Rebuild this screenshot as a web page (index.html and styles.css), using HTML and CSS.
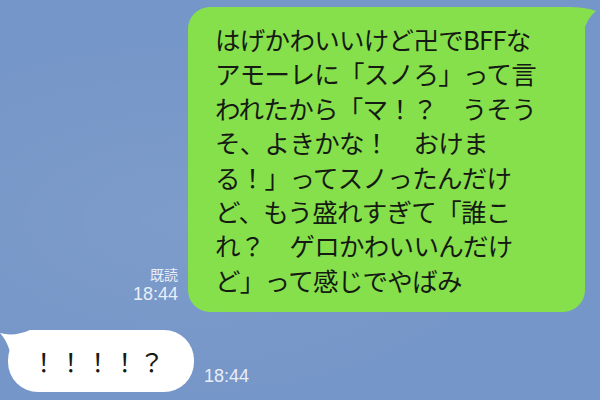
FILE: index.html
```html
<!DOCTYPE html>
<html lang="ja">

<head>
    <meta charset="UTF-8">
    <meta name="viewport" content="width=device-width, initial-scale=1.0">
    <title>トーク</title>
    <link rel="stylesheet" href="styles.css">
</head>

<body>
    <div class="chat">
        <div class="row row-me">
            <div class="meta">
                <span class="read">既読</span>
                <span class="time">18:44</span>
            </div>
            <div class="bubble bubble-me">
                <svg class="tail tail-me" width="45" height="40" viewBox="0 0 45 40">
                    <path d="M0 0 H16 Q32 0 43 4 Q34 11 30 26 V40 H0 Z" />
                </svg>
                <p>はげかわいいけど卍でBFFな<br>アモーレに「スノろ」って言<br>われたから「マ！？　うそう<br>そ、よきかな！　おけま<br>る！」ってスノったんだけ<br>ど、もう盛れすぎて「誰こ<br>れ？　ゲロかわいいんだけ<br>ど」って感じでやばみ</p>
            </div>
        </div>

        <div class="row row-you">
            <div class="bubble bubble-you">
                <svg class="tail tail-you" width="40" height="40" viewBox="0 0 40 40">
                    <path d="M0 3 Q14 7 30 0 H40 V40 H12 Q12 16 0 3 Z" />
                </svg>
                <p>！！！！？</p>
            </div>
            <div class="meta">
                <span class="time">18:44</span>
            </div>
        </div>
    </div>
</body>

</html>
```

FILE: styles.css
```css
body {
    margin: 0;
    padding: 0;
    width: 600px;
    height: 400px;
    overflow: hidden;
    background-color: #7596c8;
    background-image: radial-gradient(ellipse at 30% 55%, rgba(255, 255, 255, 0.06), transparent 60%);
    font-family: "Noto Sans CJK JP", "Liberation Sans", sans-serif;
}

.chat {
    display: flex;
    flex-direction: column;
    padding: 7px 15px 0 8px;
}

.row {
    display: flex;
    align-items: flex-end;
}

.row-me {
    justify-content: flex-end;
}

.row-you {
    margin-top: 18px;
}

.meta {
    display: flex;
    flex-direction: column;
    align-items: flex-end;
    color: #e9eef7;
    font-family: "Liberation Sans", "Noto Sans CJK JP", sans-serif;
}

.row-me .meta {
    margin-right: 10px;
    padding-bottom: 10px;
}

.row-you .meta {
    margin-left: 10px;
    padding-bottom: 8px;
}

.read {
    font-family: "Noto Sans CJK JP", sans-serif;
    font-size: 14px;
    line-height: 16px;
    margin-bottom: 4px;
}

.time {
    font-size: 18px;
    line-height: 16px;
}

.bubble {
    position: relative;
}

.bubble p {
    position: relative;
    margin: 0;
    white-space: nowrap;
    color: #151a12;
    font-size: 25.5px;
    letter-spacing: -0.7px;
}

.tail {
    position: absolute;
    top: 0;
}

.bubble-me {
    background-color: #86e04b;
    border-radius: 22px;
    padding: 15px 25px 15px 27px;
    width: 345px;
}

.bubble-me p {
    line-height: 34.4px;
}

.tail-me {
    right: -13px;
    fill: #86e04b;
}

.bubble-you {
    background-color: #fff;
    border-radius: 30px;
    padding: 0 28px 0 23px;
    height: 62px;
    display: flex;
    align-items: center;
}

.bubble-you p {
    line-height: 30px;
    letter-spacing: 1.5px;
}

.tail-you {
    left: -8px;
    fill: #fff;
}
```
